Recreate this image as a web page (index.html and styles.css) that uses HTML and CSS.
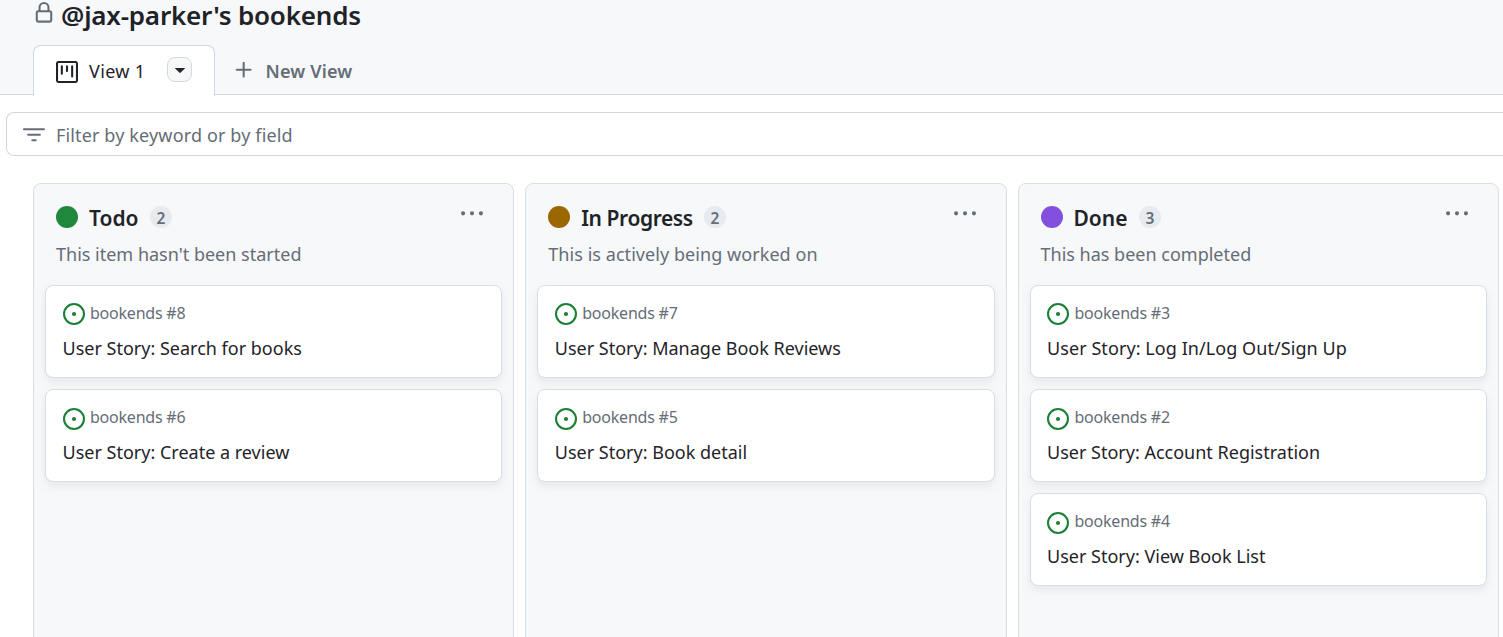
FILE: index.html
```html
<!DOCTYPE html>
<html lang="en">
<head>
<meta charset="utf-8">
<title>@jax-parker's bookends</title>
<link rel="stylesheet" href="styles.css">
</head>
<body>
<svg class="defs" aria-hidden="true">
  <symbol id="open" viewBox="0 0 16 16"><path d="M8 9.5a1.5 1.5 0 1 0 0-3 1.5 1.5 0 0 0 0 3Z"/><path d="M8 0a8 8 0 1 1 0 16A8 8 0 0 1 8 0ZM1.5 8a6.5 6.5 0 1 0 13 0 6.5 6.5 0 0 0-13 0Z"/></symbol>
  <symbol id="dots" viewBox="0 0 16 16"><path d="M8 9a1.5 1.5 0 1 0 0-3 1.5 1.5 0 0 0 0 3ZM1.5 9a1.5 1.5 0 1 0 0-3 1.5 1.5 0 0 0 0 3Zm13 0a1.5 1.5 0 1 0 0-3 1.5 1.5 0 0 0 0 3Z"/></symbol>
</svg>
<header class="header">
  <div class="title-row">
    <svg class="icon lock" viewBox="0 0 16 16"><path d="M4 4a4 4 0 0 1 8 0v2h.25c.966 0 1.75.784 1.75 1.75v5.5A1.75 1.75 0 0 1 12.25 15h-8.5A1.75 1.75 0 0 1 2 13.25v-5.5C2 6.784 2.784 6 3.75 6H4Zm8.25 3.5h-8.5a.25.25 0 0 0-.25.25v5.5c0 .138.112.25.25.25h8.5a.25.25 0 0 0 .25-.25v-5.5a.25.25 0 0 0-.25-.25ZM10.5 6V4a2.5 2.5 0 1 0-5 0v2Z"/></svg>
    <h1 class="title">@jax-parker's bookends</h1>
  </div>
  <nav class="tabs">
    <div class="tab">
      <svg class="icon" viewBox="0 0 16 16"><path d="M1.75 0h12.5C15.216 0 16 .784 16 1.75v12.5A1.75 1.75 0 0 1 14.25 16H1.75A1.75 1.75 0 0 1 0 14.25V1.75C0 .784.784 0 1.75 0ZM1.5 1.75v12.5c0 .138.112.25.25.25h12.5a.25.25 0 0 0 .25-.25V1.75a.25.25 0 0 0-.25-.25H1.75a.25.25 0 0 0-.25.25ZM11.75 3a.75.75 0 0 1 .75.75v7.5a.75.75 0 0 1-1.5 0v-7.5a.75.75 0 0 1 .75-.75Zm-8.25.75a.75.75 0 0 1 1.5 0v5.5a.75.75 0 0 1-1.5 0ZM8 3a.75.75 0 0 1 .75.75v3.5a.75.75 0 0 1-1.5 0v-3.5A.75.75 0 0 1 8 3Z"/></svg>
      <span class="tab-label">View 1</span>
      <button class="tab-menu" aria-label="View options"><svg class="caret" viewBox="0 0 10 5"><path d="M0.3 0h9.4a.3.3 0 0 1 .2.5L5.4 4.8a.6.6 0 0 1-.8 0L.1.5A.3.3 0 0 1 .3 0Z"/></svg></button>
    </div>
    <div class="new-view">
      <svg class="icon" viewBox="0 0 16 16"><path d="M7.75 2a.75.75 0 0 1 .75.75V7h4.25a.75.75 0 0 1 0 1.5H8.5v4.25a.75.75 0 0 1-1.5 0V8.500H2.750a.75.75 0 0 1 0-1.500H7V2.750A.75.75 0 0 1 7.750 2Z"/></svg>
      <span class="new-label">New View</span>
    </div>
  </nav>
</header>
<div class="filter">
  <svg class="icon" viewBox="0 0 16 16"><path d="M.75 3h14.5a.75.75 0 0 1 0 1.5H.75a.75.75 0 0 1 0-1.5ZM3 7.75A.75.75 0 0 1 3.75 7h8.500a.75.75 0 0 1 0 1.500h-8.500A.75.75 0 0 1 3 7.750Zm3 4a.75.75 0 0 1 .75-.75h2.500a.75.75 0 0 1 0 1.500h-2.500a.75.75 0 0 1-.75-.75Z"/></svg>
  <span class="filter-text">Filter by keyword or by field</span>
</div>
<main class="board">
  <section class="column">
    <div class="col-head"><span class="dot todo"></span><h2 class="col-name">Todo</h2><span class="count">2</span><svg class="icon dots"><use href="#dots"/></svg></div>
    <p class="desc">This item hasn't been started</p>
    <article class="card"><div class="ref"><svg class="icon"><use href="#open"/></svg><span>bookends #8</span></div><div class="story">User Story: Search for books</div></article>
    <article class="card"><div class="ref"><svg class="icon"><use href="#open"/></svg><span>bookends #6</span></div><div class="story">User Story: Create a review</div></article>
  </section>
  <section class="column">
    <div class="col-head"><span class="dot progress"></span><h2 class="col-name name-progress">In Progress</h2><span class="count">2</span><svg class="icon dots"><use href="#dots"/></svg></div>
    <p class="desc desc-progress">This is actively being worked on</p>
    <article class="card"><div class="ref"><svg class="icon"><use href="#open"/></svg><span>bookends #7</span></div><div class="story">User Story: Manage Book Reviews</div></article>
    <article class="card"><div class="ref"><svg class="icon"><use href="#open"/></svg><span>bookends #5</span></div><div class="story">User Story: Book detail</div></article>
  </section>
  <section class="column">
    <div class="col-head"><span class="dot done"></span><h2 class="col-name">Done</h2><span class="count">3</span><svg class="icon dots"><use href="#dots"/></svg></div>
    <p class="desc">This has been completed</p>
    <article class="card"><div class="ref"><svg class="icon"><use href="#open"/></svg><span>bookends #3</span></div><div class="story story-long">User Story: Log In/Log Out/Sign Up</div></article>
    <article class="card"><div class="ref"><svg class="icon"><use href="#open"/></svg><span>bookends #2</span></div><div class="story">User Story: Account Registration</div></article>
    <article class="card"><div class="ref"><svg class="icon"><use href="#open"/></svg><span>bookends #4</span></div><div class="story">User Story: View Book List</div></article>
  </section>
</main>
</body>
</html>
```
FILE: styles.css
```css
* { box-sizing: border-box; }
body {
  margin: 0;
  height: 637px;
  overflow: hidden;
  display: flex;
  flex-direction: column;
  background: #fff;
  color: #1f2328;
  font-family: "Noto Sans", "Open Sans", sans-serif;
  font-size: 18px;
  white-space: nowrap;
}
.defs { display: none; }
.icon { width: 22px; height: 22px; fill: currentColor; flex: none; display: block; }
h1, h2, p { margin: 0; }
.header {
  flex: none;
  height: 95px;
  padding-left: 33px;
  background: #f6f8fa;
  border-bottom: 1px solid #d0d7de;
}
.title-row { display: flex; height: 45px; }
.lock { color: #656d76; margin: 2px 6px 0 0; }
.title { font-size: 26px; line-height: 30px; font-weight: 600; letter-spacing: -0.2px; }
.tabs { display: flex; }
.tab {
  display: flex;
  align-items: center;
  width: 182px;
  height: 51px;
  padding: 1px 22px 0;
  background: #fff;
  border: 1px solid #d0d7de;
  border-bottom: 0;
  border-radius: 8px 8px 0 0;
}
.tab-label { margin: 0 0 2px 11px; letter-spacing: 0.35px; }
.tab-menu {
  display: flex;
  align-items: center;
  justify-content: center;
  width: 25px;
  height: 25px;
  margin: 0 0 4px auto;
  padding: 0;
  background: #f6f8fa;
  border: 1px solid #d5d8da;
  border-radius: 8px;
}
.caret { width: 10px; height: 5px; margin-top: 1px; fill: #24292f; }
.new-view {
  display: flex;
  align-items: center;
  height: 50px;
  padding: 2px 0 0 18px;
  color: #656d76;
  font-weight: 600;
  letter-spacing: 0.15px;
}
.new-view .icon { margin-bottom: 2px; }
.new-label { margin-left: 10.5px; }
.filter {
  flex: none;
  display: flex;
  align-items: center;
  height: 44px;
  margin: 17px 0 0 6px;
  padding-left: 16px;
  border: 1px solid #d0d7de;
  border-right: 0;
  border-radius: 8px 0 0 8px;
  color: #656d76;
}
.filter .icon { margin-top: 1px; }
.filter-text { margin-left: 11px; padding-top: 2px; letter-spacing: 0.14px; }
.board {
  flex: 1;
  display: flex;
  gap: 11px;
  margin-top: 27px;
  padding-left: 33px;
}
.column {
  flex: none;
  width: 481.25px;
  height: 480px;
  padding: 0 11px;
  background: #f6f8fa;
  border: 1px solid #d8dee4;
  border-radius: 8px;
}
.col-head { display: flex; height: 56px; padding: 22px 19px 0 11px; }
.dot { width: 22px; height: 22px; border-radius: 50%; }
.todo { background: #1f883d; }
.progress { background: #9a6700; }
.done { background: #8250df; }
.col-name { margin-left: 11px; font-size: 21px; line-height: 24px; font-weight: 600; }
.name-progress { letter-spacing: -0.42px; }
.count {
  width: 22px;
  height: 22px;
  margin-left: 11.3px;
  border-radius: 11px;
  background: #e7ebef;
  color: #656d76;
  font-size: 15.5px;
  line-height: 24px;
  font-weight: 600;
  text-align: center;
}
.dots { margin: -3px 0 0 auto; color: #656d76; }
.desc { height: 45px; padding-left: 11px; line-height: 28px; color: #656d76; }
.desc-progress { letter-spacing: 0.06px; }
.card {
  height: 93px;
  margin-bottom: 11px;
  padding: 17px 16.5px 0;
  background: #fff;
  border: 1px solid #d8dee4;
  border-radius: 8px;
  box-shadow: 0 4px 8px rgba(140, 149, 159, 0.15);
}
.ref {
  display: flex;
  height: 22px;
  color: #656d76;
  font-size: 16px;
  line-height: 20px;
  letter-spacing: -0.22px;
}
.ref .icon { color: #1a7f37; margin-right: 5.5px; }
.card + .card .ref .icon { margin-top: 1px; }
.story { line-height: 24px; margin-top: 11px; }
.story-long { letter-spacing: 0.07px; }
```
